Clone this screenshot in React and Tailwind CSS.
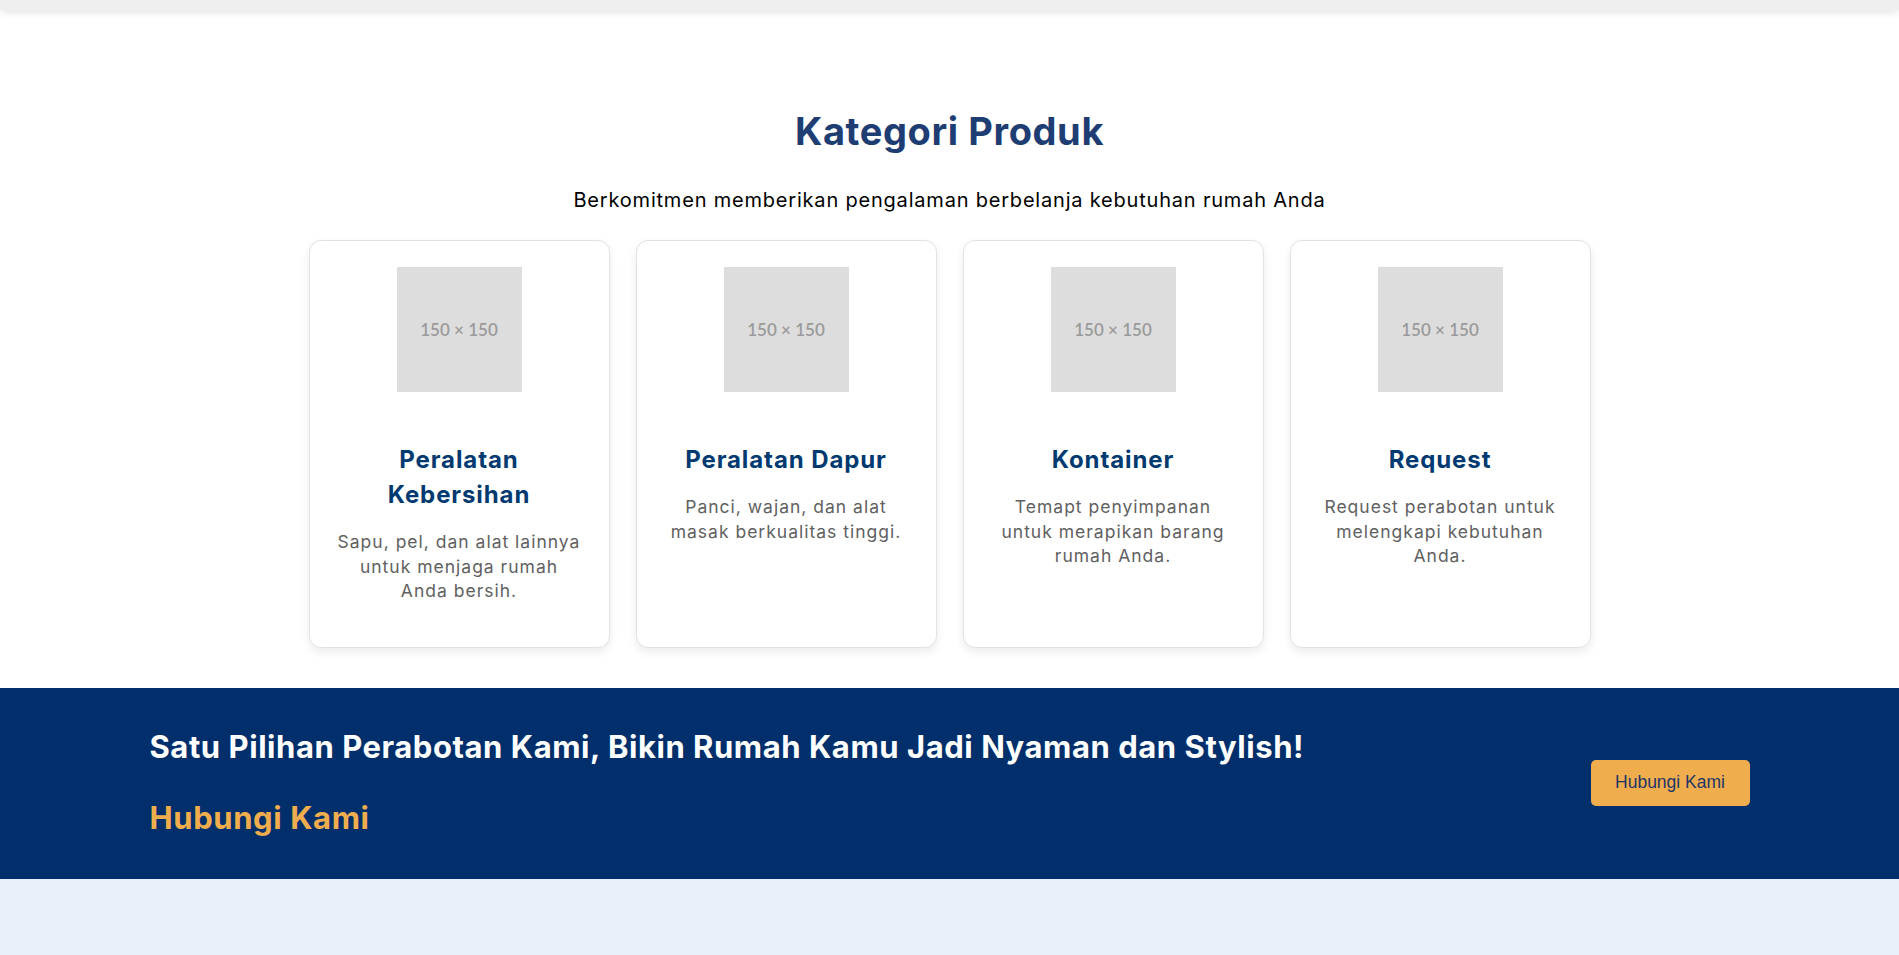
import React from "react";

const cards = [
  {
    title: ["Peralatan", "Kebersihan"],
    desc: ["Sapu, pel, dan alat lainnya", "untuk menjaga rumah", "Anda bersih."],
  },
  {
    title: ["Peralatan Dapur"],
    desc: ["Panci, wajan, dan alat", "masak berkualitas tinggi."],
  },
  {
    title: ["Kontainer"],
    desc: ["Temapt penyimpanan", "untuk merapikan barang", "rumah Anda."],
  },
  {
    title: ["Request"],
    desc: ["Request perabotan untuk", "melengkapi kebutuhan", "Anda."],
  },
];

function Card({ title, desc }) {
  return (
    <div className="h-[408px] w-[301px] rounded-[12px] border border-[#e2e2e2] bg-white px-[16px] pt-[26px] shadow-[0_4px_10px_rgba(0,0,0,0.08)] flex flex-col items-center text-center">
      <div className="flex h-[125px] w-[125px] items-center justify-center bg-[#dddddd] font-['Lato',sans-serif] text-[17px] font-semibold text-[#9a9a9a]">
        150 × 150
      </div>
      <h3 className="mt-[50px] whitespace-nowrap text-[24px] font-bold leading-[35px] tracking-[0.9px] text-[#003a70]">
        {title.map((t, i) => (
          <div key={i}>{t}</div>
        ))}
      </h3>
      <div className="mt-[18px] whitespace-nowrap text-[17.5px] leading-[24.5px] tracking-[1px] text-[#616161]">
        {desc.map((t, i) => (
          <div key={i}>{t}</div>
        ))}
      </div>
    </div>
  );
}

export default function App() {
  return (
    <div className="min-h-[955px] bg-[#e9f0f7] font-['Inter',sans-serif]">
      <div className="relative z-10 h-[10px] bg-[#efefef] shadow-[0_2px_8px_rgba(0,0,0,0.12)]" />
      <section className="bg-white pt-[98px] pb-[40px]">
        <h2 className="text-center text-[38px] font-bold leading-[46px] tracking-[0.6px] text-[#1e3d73]">
          Kategori Produk
        </h2>
        <p className="mt-[32px] text-center text-[20px] leading-[28px] tracking-[0.8px] text-black">
          Berkomitmen memberikan pengalaman berbelanja kebutuhan rumah Anda
        </p>
        <div className="mt-[26px] flex justify-center gap-[26px]">
          {cards.map((c, i) => (
            <Card key={i} {...c} />
          ))}
        </div>
      </section>
      <section className="bg-[#002f6b]">
        <div className="mx-auto flex w-[1600px] items-center justify-between pt-[39px] pb-[41px]">
          <div>
            <h2 className="text-[31px] font-bold leading-[40px] tracking-[0.55px] text-white">
              Satu Pilihan Perabotan Kami, Bikin Rumah Kamu Jadi Nyaman dan Stylish!
            </h2>
            <div className="mt-[31px] text-[31px] font-bold leading-[40px] tracking-[0.6px] text-[#f0ad4e]">
              Hubungi Kami
            </div>
          </div>
          <button className="h-[46px] w-[159px] rounded-[5px] bg-[#f0ad4e] font-['Liberation_Sans',Arial,sans-serif] text-[17.5px] text-[#1f3566]">
            Hubungi Kami
          </button>
        </div>
      </section>
    </div>
  );
}
